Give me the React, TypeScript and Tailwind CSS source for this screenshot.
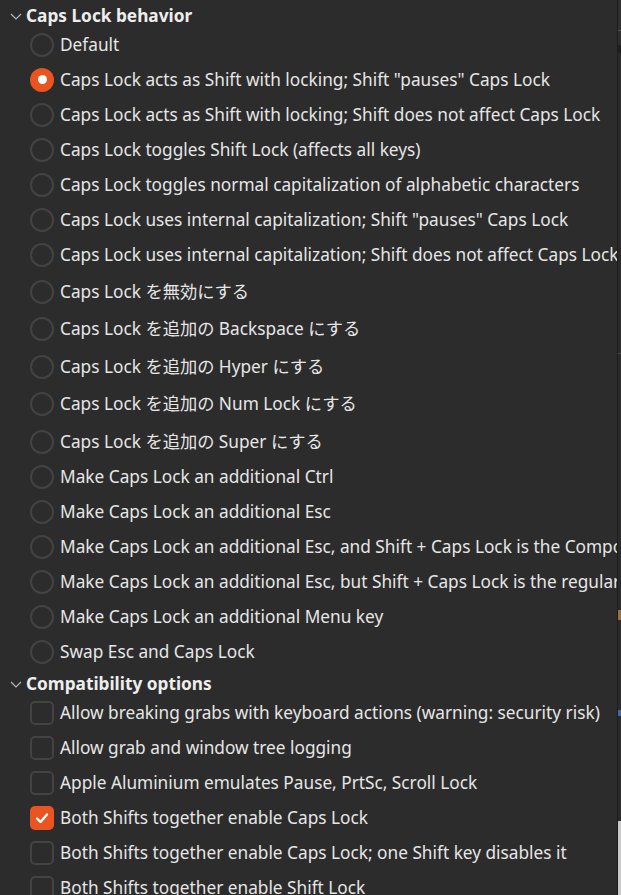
const radioOptions: { label: string; cjk?: boolean; checked?: boolean }[] = [
  { label: "Default" },
  { label: 'Caps Lock acts as Shift with locking; Shift "pauses" Caps Lock', checked: true },
  { label: "Caps Lock acts as Shift with locking; Shift does not affect Caps Lock" },
  { label: "Caps Lock toggles Shift Lock (affects all keys)" },
  { label: "Caps Lock toggles normal capitalization of alphabetic characters" },
  { label: 'Caps Lock uses internal capitalization; Shift "pauses" Caps Lock' },
  { label: "Caps Lock uses internal capitalization; Shift does not affect Caps Lock" },
  { label: "Caps Lock を無効にする", cjk: true },
  { label: "Caps Lock を追加の Backspace にする", cjk: true },
  { label: "Caps Lock を追加の Hyper にする", cjk: true },
  { label: "Caps Lock を追加の Num Lock にする", cjk: true },
  { label: "Caps Lock を追加の Super にする", cjk: true },
  { label: "Make Caps Lock an additional Ctrl" },
  { label: "Make Caps Lock an additional Esc" },
  { label: "Make Caps Lock an additional Esc, and Shift + Caps Lock is the Compose" },
  { label: "Make Caps Lock an additional Esc, but Shift + Caps Lock is the regular Caps Lock" },
  { label: "Make Caps Lock an additional Menu key" },
  { label: "Swap Esc and Caps Lock" },
];

const checkOptions: { label: string; checked?: boolean }[] = [
  { label: "Allow breaking grabs with keyboard actions (warning: security risk)" },
  { label: "Allow grab and window tree logging" },
  { label: "Apple Aluminium emulates Pause, PrtSc, Scroll Lock" },
  { label: "Both Shifts together enable Caps Lock", checked: true },
  { label: "Both Shifts together enable Caps Lock; one Shift key disables it" },
  { label: "Both Shifts together enable Shift Lock" },
];

function Chevron() {
  return (
    <svg width="14" height="14" viewBox="0 0 14 14" className="shrink-0">
      <path d="M2 5 L7 10 L12 5" fill="none" stroke="#b8b8b8" strokeWidth="1.2" />
    </svg>
  );
}

function Header({ title, className }: { title: string; className: string }) {
  return (
    <div className={`flex items-center gap-[3px] pl-[9px] ${className}`}>
      <Chevron />
      <span className="text-[17.25px] font-bold leading-[24px] text-[#eeeeee]">{title}</span>
    </div>
  );
}

function Radio({ checked }: { checked?: boolean }) {
  if (checked) {
    return (
      <span className="flex h-[24px] w-[24px] shrink-0 items-center justify-center rounded-full bg-[#e95420]">
        <span className="h-[9px] w-[9px] rounded-full bg-white" />
      </span>
    );
  }
  return <span className="h-[24px] w-[24px] shrink-0 rounded-full border-2 border-[#434343]" />;
}

function Checkbox({ checked }: { checked?: boolean }) {
  if (checked) {
    return (
      <span className="flex h-[24px] w-[24px] shrink-0 items-center justify-center rounded-[5px] bg-[#e95420]">
        <svg width="16" height="16" viewBox="0 0 16 16">
          <path d="M3 8.5 L6.5 12 L13 4.5" fill="none" stroke="white" strokeWidth="2.4" strokeLinecap="round" strokeLinejoin="round" />
        </svg>
      </span>
    );
  }
  return <span className="h-[24px] w-[24px] shrink-0 rounded-[5px] border-2 border-[#434343]" />;
}

export default function App() {
  return (
    <div className="flex h-[895px] w-[621px] overflow-hidden bg-[#2c2c2c] font-['Noto_Sans','Noto_Sans_CJK_JP',sans-serif] text-[#e6e6e6]">
      <div className="flex w-[617px] shrink-0 flex-col overflow-hidden">
        <Header title="Caps Lock behavior" className="h-[27px] pt-[5px]" />
        {radioOptions.map((o) => (
          <div
            key={o.label}
            className={`flex shrink-0 items-center gap-[6px] pl-[30px] whitespace-nowrap ${o.cjk ? "h-[37.5px] pt-[2px]" : "h-[35px]"}`}
          >
            <Radio checked={o.checked} />
            <span className="text-[17.25px] leading-[24px]">{o.label}</span>
          </div>
        ))}
        <Header title="Compatibility options" className="h-[26px] pt-[2px]" />
        {checkOptions.map((o) => (
          <div key={o.label} className="flex h-[35px] shrink-0 items-center gap-[6px] pl-[30px] whitespace-nowrap">
            <Checkbox checked={o.checked} />
            <span className="text-[17.25px] leading-[24px]">{o.label}</span>
          </div>
        ))}
      </div>
      {/* strip of the window behind */}
      <div className="flex w-[4px] flex-col border-l border-[#1d1d1d] bg-[#2a2a2a]">
        <div className="h-[30px] bg-[#303030]" />
        <div className="h-[1px] bg-[#555555]" />
        <div className="h-[14px] bg-[#2e2e2e]" />
        <div className="h-[8px] bg-[#1f1f1f]" />
        <div className="h-[300px]" />
        <div className="h-[1px] bg-[#4a4a4a]" />
        <div className="h-[256px]" />
        <div className="h-[10px] bg-[#a0703a]" />
        <div className="h-[90px]" />
        <div className="h-[6px] bg-[#3a6ea8]" />
        <div className="h-[105px]" />
        <div className="flex-1 bg-[#c9c9c9]" />
      </div>
    </div>
  );
}
